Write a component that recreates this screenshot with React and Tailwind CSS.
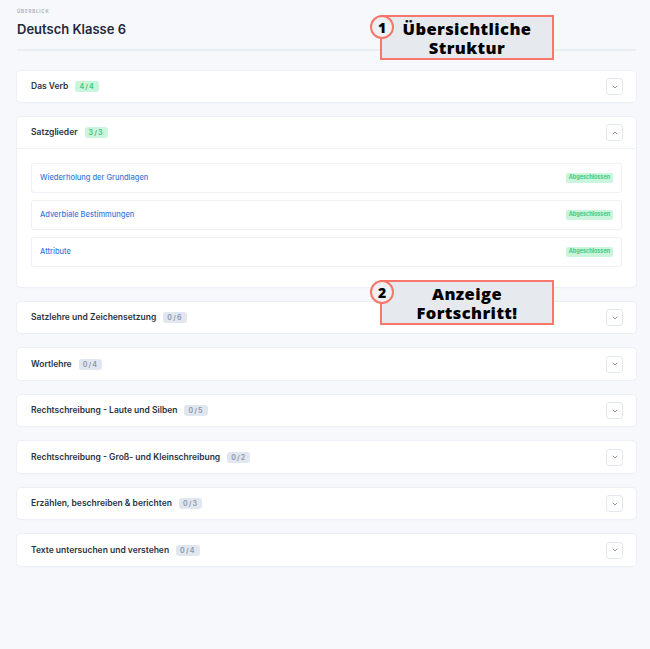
import React from "react";

const topics = [
  { title: "Das Verb", done: 4, total: 4 },
  {
    title: "Satzglieder",
    done: 3,
    total: 3,
    open: true,
    lessons: ["Wiederholung der Grundlagen", "Adverbiale Bestimmungen", "Attribute"],
  },
  { title: "Satzlehre und Zeichensetzung", done: 0, total: 6 },
  { title: "Wortlehre", done: 0, total: 4 },
  { title: "Rechtschreibung - Laute und Silben", done: 0, total: 5 },
  { title: "Rechtschreibung - Groß- und Kleinschreibung", done: 0, total: 2 },
  { title: "Erzählen, beschreiben & berichten", done: 0, total: 3 },
  { title: "Texte untersuchen und verstehen", done: 0, total: 4 },
];

const Chevron = ({ up }) => (
  <button className="w-[17px] h-[17px] flex items-center justify-center rounded-[3px] border border-[#e3e8f0] bg-white">
    <svg width="6" height="4" viewBox="0 0 6 4" fill="none">
      <path
        d={up ? "M1 3L3 1L5 3" : "M1 1L3 3L5 1"}
        stroke="#8c96a8"
        strokeWidth="1"
        strokeLinecap="round"
        strokeLinejoin="round"
      />
    </svg>
  </button>
);

const Badge = ({ done, total }) => {
  const complete = done === total;
  return (
    <span
      className={
        "h-[11px] px-[4px] rounded-[3px] flex items-center leading-none text-[7px] font-semibold tracking-[1.2px] " +
        (complete ? "bg-[#c8f5dc] text-[#35c77a]" : "bg-[#e2e7ef] text-[#8796ab]")
      }
    >
      {done}/{total}
    </span>
  );
};

const Note = ({ n, lines, top }) => (
  <div className="absolute left-[370px]" style={{ top }}>
    <div className="relative">
      <div className="ml-[10px] mt-[12px] w-[174px] h-[45px] bg-[#e6e9ee] border-2 border-[#f8766a] flex flex-col items-center justify-center leading-[19px] text-[16.5px] font-extrabold tracking-[0.4px] text-black font-['Open_Sans',sans-serif]">
        {lines.map((l) => (
          <span key={l}>{l}</span>
        ))}
      </div>
      <div className="absolute left-0 top-0 w-[24px] h-[24px] rounded-full border-2 border-[#f8766a] bg-[#eef0f3] flex items-center justify-center text-[14px] font-extrabold text-black font-['Open_Sans',sans-serif]">
        {n}
      </div>
    </div>
  </div>
);

export default function App() {
  return (
    <div className="relative min-h-[649px] w-[650px] bg-[#f7f8fb] font-['Inter',sans-serif] px-[17px] pt-[9px] pb-[40px]">
      <div className="text-[4.5px] font-semibold tracking-[0.8px] text-[#a3abba]">ÜBERBLICK</div>
      <h1 className="mt-[4px] text-[13px] font-semibold text-[#1f2a3c] leading-[18px]">Deutsch Klasse 6</h1>
      <div className="mt-[11px] h-[2px] w-[619px] bg-[#e9edf4]" />

      <div className="mt-[20px] w-[619px] flex flex-col gap-[15px]">
        {topics.map((t) => (
          <div
            key={t.title}
            className="bg-white rounded-[4px] shadow-[0_0_0_1px_#eceff5,0_1px_2px_rgba(30,40,60,0.04)]"
          >
            <div
              className={
                "pl-[14px] pr-[13px] flex items-center justify-between " +
                (t.open ? "border-b border-[#edf0f5] h-[32px]" : "h-[31.5px]")
              }
            >
              <div className="flex items-center gap-[7px]">
                <span className="text-[8.5px] font-semibold text-[#2b3444]">{t.title}</span>
                <Badge done={t.done} total={t.total} />
              </div>
              <Chevron up={t.open} />
            </div>
            {t.open && (
              <div className="px-[14px] pt-[14px] pb-[20px] flex flex-col gap-[7.5px]">
                {t.lessons.map((l) => (
                  <div
                    key={l}
                    className="h-[29.5px] pl-[8px] pr-[8px] flex items-center justify-between rounded-[3px] border border-[#edf0f5] bg-white"
                  >
                    <span className="text-[7.5px] font-medium text-[#3a7bdc]">{l}</span>
                    <span className="h-[10px] px-[3px] rounded-[2px] bg-[#c8f5dc] text-[#2fc473] text-[5.5px] font-semibold leading-none flex items-center">
                      Abgeschlossen
                    </span>
                  </div>
                ))}
              </div>
            )}
          </div>
        ))}
      </div>

      <Note n="1" lines={["Übersichtliche", "Struktur"]} top={3} />
      <Note n="2" lines={["Anzeige", "Fortschritt!"]} top={268} />
    </div>
  );
}
